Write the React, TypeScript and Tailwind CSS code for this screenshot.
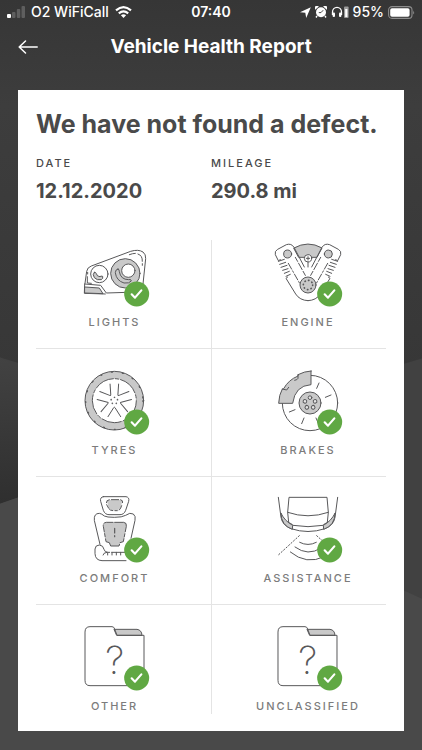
import React from "react";
import clsx from "clsx";

const LINE = "#58585a";
const FILL = "#c9c9c9";

const LightsIcon = () => (
  <>
    <path d="M43 148 L48 112 Q50 100 62 96 L180 52 Q203 45 217 54 Q226 61 225 74 L217 150" />
    <path d="M42 150 L90 154 L107 177 L170 175" />
    <path d="M42 150 L41 178 L104 180" />
    <path d="M43 159 L86 162 L97 179 L43 177 Z" fill={FILL} />
    <path d="M50 128 V147 L62 148 M51 115 V120" />
    <path d="M176 62 Q186 58 194 58 M202 60 Q216 64 215 82 M215 89 V94" />
    <circle cx="86" cy="120" r="26" />
    <path d="M71 115 Q64 121 71 131 Q79 140 92 137 Q98 134 96 127 Q90 125 88 128 Q79 128 77 119 Q76 114 71 115 Z" fill={FILL} />
    <circle cx="164" cy="118" r="44" fill={FILL} />
    <circle cx="173" cy="110" r="20" fill="white" />
    <path d="M142 105 Q134 106 134 116 Q137 140 160 147 Q176 149 182 141 Q181 134 174 137 Q150 137 146 113 Q146 105 142 105 Z" />
  </>
);

const EngineHalf = () => (
  <>
    <path d="M143 200 Q118 199 106 180 L77 133 L82 129 M60 77 L54 80 L45 62 Q42 51 52 46 L78 32 Q93 27 101 40 L132 99" />
    <path d="M54 82 L72 76 M58 91 L76 85 M62 100 L80 94 M67 109 L83 104 M72 118 L87 112 M77 127 L90 121" />
    <circle cx="82" cy="60" r="12" fill={FILL} />
    <path d="M84 88 L122 155" strokeDasharray="20 6 5 6" />
    <path d="M105 70 L136 126" strokeDasharray="14 6 22 6" />
  </>
);

const EngineIcon = () => (
  <g transform="translate(-10 0)">
    <path d="M101 42 Q143 18 185 42 L170 70 H116 Z" fill={FILL} />
    <EngineHalf />
    <g transform="translate(286 0) scale(-1 1)">
      <EngineHalf />
    </g>
    <circle cx="143" cy="73" r="11" fill="white" />
    <path d="M143 68 V78 M138 73 H148 M143 84 V99" />
    <circle cx="143" cy="153" r="24" fill={FILL} />
    <circle cx="143" cy="153" r="14" strokeWidth="5" strokeDasharray="1 10" />
  </g>
);

const TyresIcon = () => (
  <>
    <circle cx="131" cy="116" r="88" fill={FILL} />
    <circle cx="131" cy="116" r="86" strokeWidth="4" strokeDasharray="3 30" />
    <circle cx="131" cy="116" r="66" fill="white" strokeDasharray="60 6 10 6" />
    {[0, 72, 144, 216, 288].map((angle) => (
      <g key={angle} transform={`rotate(${angle} 131 116)`}>
        <path d="M112 164 L129 137 Q131 134 133 137 L150 164" />
        <circle cx="131" cy="106" r="1" />
      </g>
    ))}
  </>
);

const BrakesIcon = () => (
  <g transform="translate(-10 0)">
    <circle cx="149" cy="123" r="83" />
    <path
      d="M152 27 V68 Q104 71 97 124 H55 Q56 98 66 81 L70 80 Q84 54 113 42 V38 Q132 28 152 27 Z"
      fill={FILL}
    />
    <path d="M113 38 V49 Q111 54 103 55 M66 81 L79 84 L85 76" />
    <circle cx="149" cy="123" r="33" fill={FILL} />
    {[0, 72, 144, 216, 288].map((angle) => (
      <circle key={angle} cx="149" cy="107" r="5.5" fill="#e4e4e4" transform={`rotate(${angle} 149 123)`} />
    ))}
    <path d="M176 63 L169 79 M195 106 L212 99 M87 150 L104 143 M131 168 L124 185 M167 168 L173 182" />
  </g>
);

const ComfortIcon = () => (
  <>
    <path d="M98 20 H166 Q177 22 174 34 L165 61 Q160 74 148 74 H115 Q103 74 98 61 L90 34 Q87 22 98 20 Z" />
    <path d="M108 30 H155 L151 51 Q146 62 132 62 Q118 62 113 51 Z" fill={FILL} stroke="none" />
    <path d="M107 38 Q107 30 116 29 M122 29 H144 M150 29 Q158 31 156 38 M108 44 L114 55 Q118 62 126 62 M133 62 H140 M146 60 Q151 55 153 47" />
    <path d="M88 163 L71 91 Q69 70 86 70 Q93 71 101 78 Q108 82 131 82 Q155 82 165 76 Q178 66 188 72 Q196 78 193 91 L181 145" />
    <path
      d="M107 97 H159 Q169 98 167 109 L158 155 L148 158 L145 168 H120 L116 158 L106 155 L98 109 Q96 98 107 97 Z"
      fill={FILL}
      strokeDasharray="20 5 60 6 10 5"
    />
    <path d="M132 115 V129 M132 137 V140" strokeWidth="3.5" />
    <path d="M166 212 H94 Q74 211 73 191 V177 Q74 165 86 165 Q98 166 100 178 Q102 187 112 187 H117 M123 187 H168" />
    <path d="M97 195 Q98 188 108 187 M111 188 V195 M124 187 V195 M137 187 V195 M150 187 V195" />
  </>
);

const AssistanceIcon = () => (
  <g transform="translate(-10 0)">
    <path d="M54 22 L62 82 Q66 106 92 116 Q143 133 194 116 Q220 106 224 82 L232 22" />
    <path d="M85 97 L82 67 L86 22 H200 L204 67 L201 97" />
    <path d="M82 67 Q143 88 204 67 M84 97 Q96 102 98 106 Q143 114 188 106 Q190 102 202 97" />
    <path d="M62 70 Q74 94 97 106 L96 118 Q62 106 62 70 Z" fill={FILL} />
    <path d="M224 70 Q212 94 189 106 L190 118 Q224 106 224 70 Z" fill={FILL} />
    <path d="M117 137 L54 195 M169 137 L188 154" strokeDasharray="4 6" />
    <path d="M118 157 Q143 170 168 157 M104 171 Q143 200 182 174 M90 186 Q138 226 192 200" />
  </g>
);

const FolderIcon = () => (
  <>
    <path d="M131 34 H199 Q213 36 214 52 H139 Z" fill={FILL} />
    <path d="M43 41 Q43 26 58 26 H124 Q130 26 132 33 L139 52 H220 V188 Q220 203 205 203 H58 Q43 203 43 188 Z" />
    <text
      x="132"
      y="168"
      textAnchor="middle"
      fontSize="116"
      fontWeight="200"
      fill={LINE}
      stroke="none">
      ?
    </text>
  </>
);

interface CheckItem {
  label: string;
  icon: React.ReactNode;
}

const rows: CheckItem[][] = [
  [
    { label: "LIGHTS", icon: <LightsIcon /> },
    { label: "ENGINE", icon: <EngineIcon /> },
  ],
  [
    { label: "TYRES", icon: <TyresIcon /> },
    { label: "BRAKES", icon: <BrakesIcon /> },
  ],
  [
    { label: "COMFORT", icon: <ComfortIcon /> },
    { label: "ASSISTANCE", icon: <AssistanceIcon /> },
  ],
  [
    { label: "OTHER", icon: <FolderIcon /> },
    { label: "UNCLASSIFIED", icon: <FolderIcon /> },
  ],
];

const CheckCell = ({ label, icon }: CheckItem) => (
  <div className="flex flex-col items-center">
    <svg
      viewBox="-2 18 270 198"
      className="h-[66px] w-[90px] overflow-visible"
      fill="none"
      stroke={LINE}
      strokeWidth="3"
      strokeLinecap="round"
      strokeLinejoin="round"
      aria-hidden="true">
      {icon}
      <circle cx="198" cy="180" r="37.5" fill="#60a843" stroke="none" />
      <path d="M183 181 L193 191 L212 169" stroke="white" strokeWidth="6.5" />
    </svg>
    <span className="mt-2 text-[11px] leading-4 font-medium tracking-[2px] text-[#7c7c7c]">
      {label}
    </span>
  </div>
);

const StatusBar = () => (
  <div className="grid h-6 grid-cols-[1fr_auto_1fr] items-center px-[7px] text-sm font-medium text-white">
    <div className="flex items-center gap-1.5">
      <svg viewBox="0 0 18 12" className="h-3 w-[18px]" fill="white">
        <rect y="8" width="4" height="4" rx="1" />
        <g fillOpacity="0.2">
          <rect x="5" y="6" width="3.5" height="6" rx="1" />
          <rect x="9.8" y="3" width="3.5" height="9" rx="1" />
          <rect x="14.5" width="3.5" height="12" rx="1" />
        </g>
      </svg>
      <span>O2 WiFiCall</span>
      <svg viewBox="0 0 17 12" className="h-3 w-[17px]" fill="none" stroke="white" strokeWidth="2.2">
        <path d="M1 4.4 Q8.5 -2 16 4.4 M3.8 7.3 Q8.5 3.4 13.2 7.3" />
        <path d="M5.9 9.3 Q8.5 7.2 11.1 9.3 L8.5 12 Z" fill="white" stroke="none" />
      </svg>
    </div>
    <span className="font-semibold">07:40</span>
    <div className="flex items-center justify-end gap-1">
      <svg viewBox="0 0 11 11" className="size-[11px]" fill="white">
        <path d="M10.8 0.2 L6.2 11 L5.3 5.8 L0 5.2 Z" />
      </svg>
      <svg viewBox="0 0 12 12" className="size-3" fill="white">
        <circle cx="6" cy="6.3" r="5" />
        <path d="M0.2 3.8 A2.3 2.3 0 0 1 3.8 0.5 Z M11.8 3.8 A2.3 2.3 0 0 0 8.2 0.5 Z" />
        <path d="M2 10 L1 11.5 M10 10 L11 11.5" stroke="white" strokeWidth="1.4" />
        <path d="M8.2 4.2 L6 6.6 H3.8" fill="none" stroke="#363636" strokeWidth="0.9" />
      </svg>
      <svg viewBox="0 0 18 12" className="h-3 w-[18px]" fill="white">
        <path d="M1.5 9 V6 A4.5 4.7 0 0 1 10.5 6 V9" fill="none" stroke="white" strokeWidth="1.3" />
        <rect x="1.6" y="6.5" width="2.4" height="4.5" rx="1" />
        <rect x="8" y="6.5" width="2.4" height="4.5" rx="1" />
        <rect x="13" y="0.5" width="4.6" height="11.5" rx="1" fillOpacity="0.5" />
        <rect x="14.2" y="3" width="2.2" height="8" />
      </svg>
      <span>95%</span>
      <svg viewBox="0 0 27 13" className="h-[13px] w-[27px]" fill="white">
        <rect x="0.6" y="0.6" width="23.4" height="11.8" rx="3.4" fill="none" stroke="#8c8c8c" strokeWidth="1.1" />
        <rect x="2.2" y="2.2" width="19.4" height="8.6" rx="1.8" />
        <path d="M25.2 4.5 Q27 6.5 25.2 8.5 Z" fill="#8c8c8c" />
      </svg>
    </div>
  </div>
);

const Backdrop = () => (
  <svg
    viewBox="0 0 422 750"
    preserveAspectRatio="none"
    className="absolute inset-0 -z-10 h-full w-full"
    aria-hidden="true">
    <defs>
      <linearGradient id="upper" x1="0" y1="0" x2="0" y2="1">
        <stop offset="0" stopColor="#363636" />
        <stop offset="0.25" stopColor="#3d3d3d" />
        <stop offset="1" stopColor="#363636" />
      </linearGradient>
      <linearGradient id="middle" x1="0" y1="357" x2="0" y2="503" gradientUnits="userSpaceOnUse">
        <stop offset="0" stopColor="#424242" />
        <stop offset="1" stopColor="#2f2f2f" />
      </linearGradient>
    </defs>
    <rect width="422" height="750" fill="#414141" />
    <path d="M0 0 H422 V358 L211 420 L0 357 Z" fill="url(#upper)" />
    <path d="M0 357 L211 474 V430 L0 503 Z" fill="url(#middle)" />
    <path d="M0 503 L211 430 V502 L422 598 V750 H0 Z" fill="#494949" />
  </svg>
);

export default function App() {
  return (
    <div className="relative isolate min-h-screen bg-[#494949] pb-5 font-['Inter','Liberation_Sans',sans-serif]">
      <Backdrop />
      <StatusBar />

      <header className="grid h-[46px] grid-cols-[1fr_auto_1fr] items-center px-[18px] text-white">
        <button type="button" aria-label="Back" className="w-5">
          <svg viewBox="0 0 20 14" className="h-3.5 w-5" fill="none" stroke="white" strokeWidth="1.5" strokeLinecap="round" strokeLinejoin="round">
            <path d="M19.2 7 H1.5 M7.5 1 L1.2 7 L7.5 13" />
          </svg>
        </button>
        <h1 className="text-[19px] leading-7 font-bold">Vehicle Health Report</h1>
      </header>

      <main className="mx-[18px] mt-5 bg-white pt-[18px] pb-[17px] text-[#4a4a4a]">
        <h2 className="px-[18px] text-[25px] leading-8 font-bold">
          We have not found a defect.
        </h2>

        <dl className="mt-[15px] grid grid-cols-2 px-[18px]">
          <div>
            <dt className="text-[11px] leading-4 font-medium tracking-[2px]">DATE</dt>
            <dd className="mt-2 text-xl leading-6 font-bold">12.12.2020</dd>
          </div>
          <div>
            <dt className="text-[11px] leading-4 font-medium tracking-[2px]">MILEAGE</dt>
            <dd className="mt-2 text-xl leading-6 font-bold">290.8 mi</dd>
          </div>
        </dl>

        <section className="mt-[37px]">
          {rows.map((row, idx) => (
            <React.Fragment key={idx}>
              {idx > 0 && <hr className="mx-[18px] border-[#e4e4e4]" />}
              <div className="grid grid-cols-2">
                {row.map((item, col) => (
                  <div
                    key={item.label}
                    className={clsx(
                      col > 0 && "border-l border-[#e4e4e4]",
                      idx > 0 && "pt-[19px]",
                      idx < rows.length - 1 && "pb-[18px]",
                    )}>
                    <CheckCell {...item} />
                  </div>
                ))}
              </div>
            </React.Fragment>
          ))}
        </section>
      </main>
    </div>
  );
}
